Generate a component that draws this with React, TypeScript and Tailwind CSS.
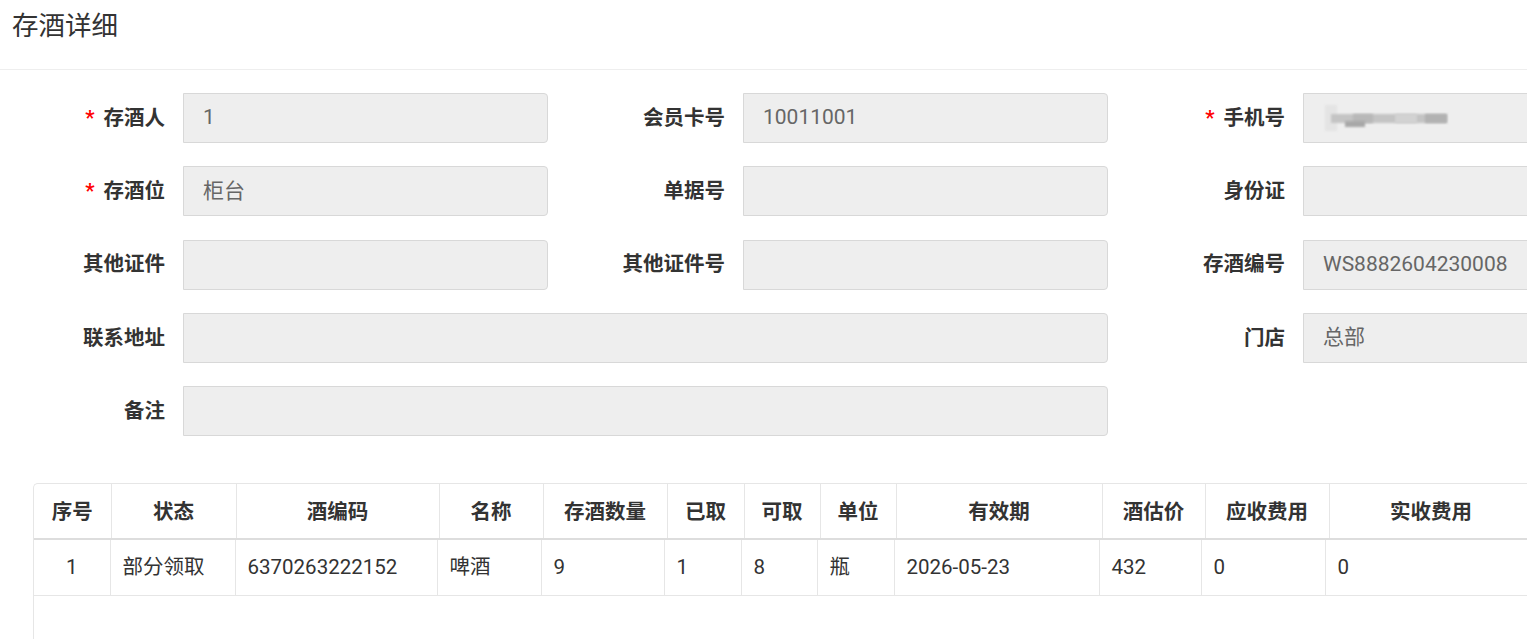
import React from 'react';

type FieldProps = {
  label: string;
  value?: React.ReactNode;
  required?: boolean;
  wide?: boolean;
};

const Field: React.FC<FieldProps> = ({ label, value, required, wide }) => (
  <div className={`flex items-center shrink-0 ${wide ? 'w-[1120px]' : 'w-[560px]'}`}>
    <label className="w-[150px] shrink-0 pr-[18px] text-right text-[20.5px] font-bold text-[#333] leading-none">
      {required && <span className="text-[#f00] mr-[9px]">*</span>}
      {label}
    </label>
    <div
      className={`h-[50px] shrink-0 bg-[#eeeeee] border border-[#d8d8d8] rounded-r-[4px] pl-[19px] flex items-center text-[21px] text-[#666] ${
        wide ? 'w-[925px]' : 'w-[365px]'
      }`}
    >
      {value}
    </div>
  </div>
);

// blurred phone number
const Masked: React.FC = () => (
  <div className="relative w-[130px] h-[26px]">
    <div className="absolute left-[2px] top-[0px] w-[12px] h-[26px] bg-[#e4e4e4] blur-[1px]" />
    <div className="absolute left-[8px] top-[9px] w-[116px] h-[9px] bg-[#c4c4c4] blur-[1px]" />
    <div className="absolute left-[30px] top-[9px] w-[20px] h-[9px] bg-[#b8b8b8] blur-[1px]" />
    <div className="absolute left-[72px] top-[9px] w-[22px] h-[9px] bg-[#d2d2d2] blur-[1px]" />
    <div className="absolute left-[102px] top-[9px] w-[22px] h-[9px] bg-[#b2b2b2] blur-[1px]" />
    <div className="absolute left-[22px] top-[16px] w-[20px] h-[6px] bg-[#a8a8a8] blur-[1px]" />
  </div>
);

const headerCols = [77, 125, 203, 104, 124, 77, 76, 76, 206, 103, 124, 204];
const bodyCols = [76, 125, 202, 104, 123, 77, 76, 77, 205, 102, 124, 204];

const headers = ['序号', '状态', '酒编码', '名称', '存酒数量', '已取', '可取', '单位', '有效期', '酒估价', '应收费用', '实收费用'];

const rows = [
  ['1', '部分领取', '6370263222152', '啤酒', '9', '1', '8', '瓶', '2026-05-23', '432', '0', '0'],
];

const App: React.FC = () => {
  return (
    <div
      className="w-screen h-screen overflow-hidden bg-white flex flex-col"
      style={{ fontFamily: 'Roboto, "Noto Sans CJK SC", "Noto Sans", sans-serif' }}
    >
      {/* Title */}
      <div className="h-[70px] shrink-0 border-b border-[#eeeeee] flex items-center pl-[12px] pb-[16px]">
        <h1 className="text-[26.5px] text-[#333] font-normal leading-none">存酒详细</h1>
      </div>

      {/* Form */}
      <div className="pt-[23px] pl-[33px] flex flex-col gap-[23.25px] w-[1800px] shrink-0">
        <div className="flex">
          <Field label="存酒人" required value="1" />
          <Field label="会员卡号" value="10011001" />
          <Field label="手机号" required value={<Masked />} />
        </div>
        <div className="flex">
          <Field label="存酒位" required value="柜台" />
          <Field label="单据号" />
          <Field label="身份证" />
        </div>
        <div className="flex">
          <Field label="其他证件" />
          <Field label="其他证件号" />
          <Field label="存酒编号" value="WS8882604230008" />
        </div>
        <div className="flex">
          <Field label="联系地址" wide />
          <Field label="门店" value="总部" />
        </div>
        <div className="flex">
          <Field label="备注" wide />
        </div>
      </div>

      {/* Table */}
      <div className="mt-[47px] ml-[33px] flex-1 w-[1600px] border-l border-t border-[#e6e6e6] rounded-tl-[5px] text-[20.5px] text-[#333]">
        <table className="border-collapse table-fixed">
          <colgroup>
            {headerCols.map((w, i) => (
              <col key={i} style={{ width: w }} />
            ))}
          </colgroup>
          <thead>
            <tr className="h-[55px]">
              {headers.map((h) => (
                <th
                  key={h}
                  className="border-r border-[#e6e6e6] border-b-2 border-b-[#dddddd] font-bold text-center p-0 pt-[2px]"
                >
                  {h}
                </th>
              ))}
            </tr>
          </thead>
        </table>
        <table className="border-collapse table-fixed">
          <colgroup>
            {bodyCols.map((w, i) => (
              <col key={i} style={{ width: w }} />
            ))}
          </colgroup>
          <tbody>
            {rows.map((r, ri) => (
              <tr key={ri} className="h-[55px]">
                {r.map((c, ci) => (
                  <td
                    key={ci}
                    className={`border-r border-b border-[#e6e6e6] p-0 ${
                      ci === 0 ? 'text-center' : 'text-left pl-[12px]'
                    }`}
                  >
                    {c}
                  </td>
                ))}
              </tr>
            ))}
          </tbody>
        </table>
      </div>
    </div>
  );
};

export default App;
